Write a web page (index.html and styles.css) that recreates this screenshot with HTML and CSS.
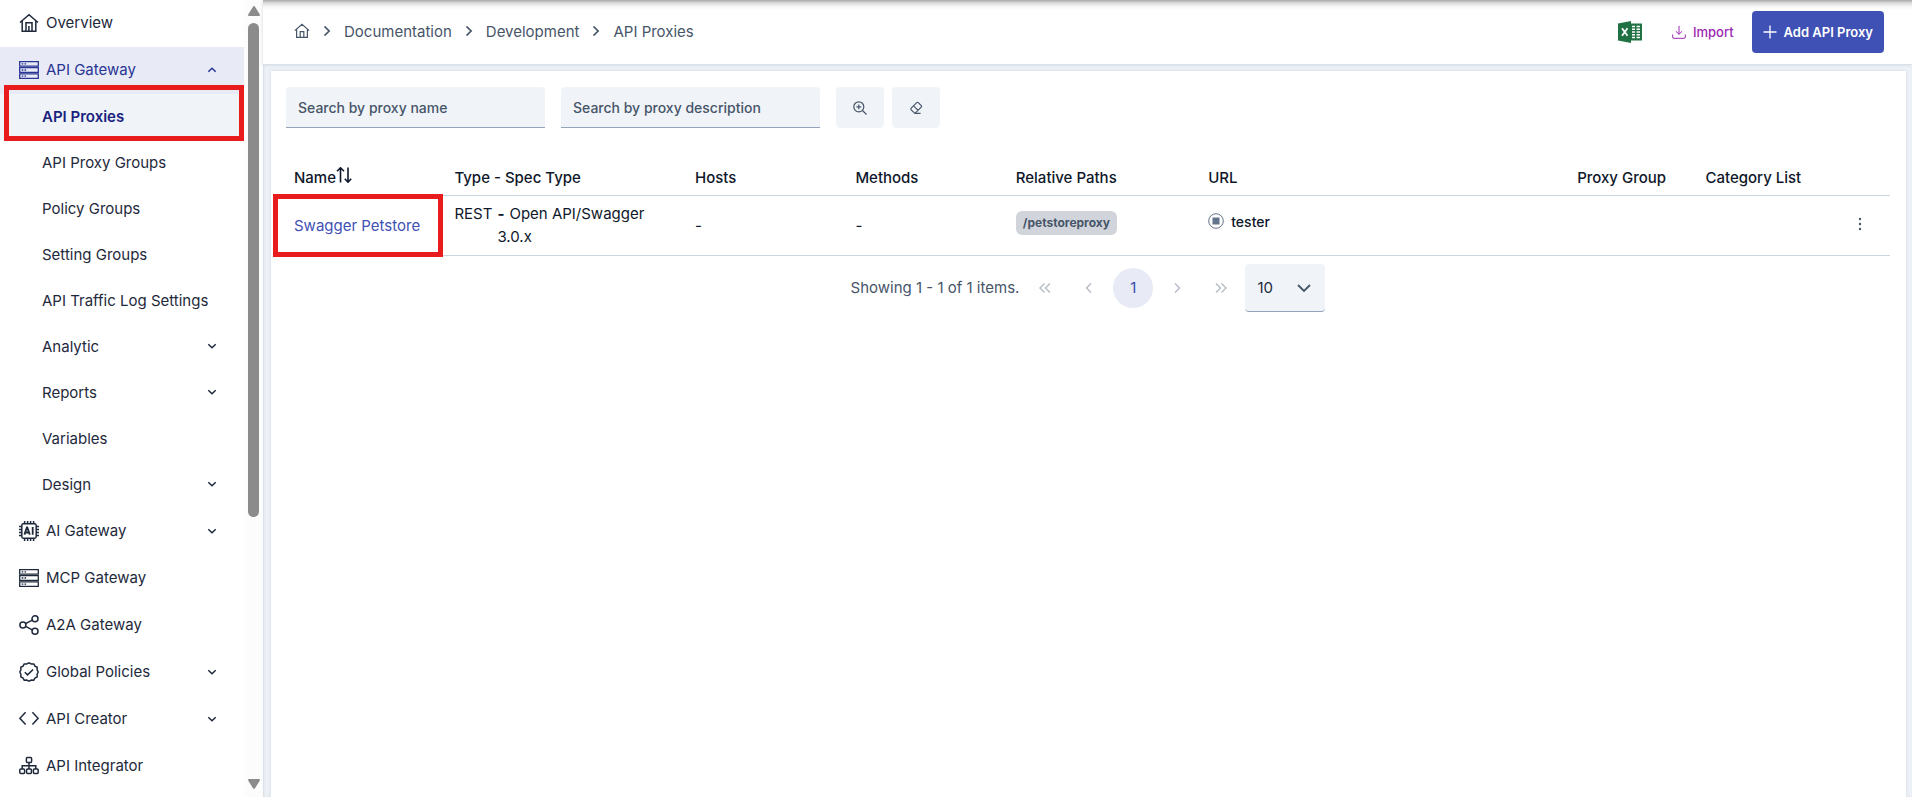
FILE: index.html
```
<!DOCTYPE html>
<html lang="en">
<head>
  <meta charset="UTF-8">
  <meta name="viewport" content="width=device-width, initial-scale=1.0"/>
  <title>API Proxies</title>
  <link rel="stylesheet" href="styles.css">
</head>
<body>
  <!-- shared icons -->
  <svg class="sprite" aria-hidden="true">
    <symbol id="home" viewBox="0 0 20 20"><path d="M1 9.5 10 1.8l9 7.7M3.2 8v10.2h13.6V8M7 18V9.7h6V18M9.9 18v-5"/></symbol>
    <symbol id="house" viewBox="0 0 16 16"><path d="M.8 7.6 8 1.2l7.2 6.4M2.6 6.4v8h10.8v-8M6.2 14.4V8.6h3.6v5.8"/></symbol>
    <symbol id="server" viewBox="0 0 20 20"><path d="M.7 1.6h18.6v4.6H.7zM.7 7.7h18.6v4.6H.7zM.7 13.8h18.6v4.6H.7zM2.7 3.9h1.6M5.5 3.9h1.6M2.7 10h1.6M5.5 10h1.6M2.7 16.1h1.6M5.5 16.1h1.6"/></symbol>
    <symbol id="down" viewBox="0 0 10 10"><path d="m1.3 3.2 3.7 3.6 3.7-3.6"/></symbol>
    <symbol id="up" viewBox="0 0 10 10"><path d="M1.3 6.8 5 3.2l3.7 3.6"/></symbol>
    <symbol id="right" viewBox="0 0 10 10"><path d="m2.5.5 4.600 4.500-4.600 4.500"/></symbol>
  </svg>

  <div class="app">
    <!-- Sidebar -->
    <aside class="sidebar">
      <nav class="menu">
        <a class="item" href="#"><svg class="icon"><use href="#home"/></svg>Overview</a>
        <button class="item open"><svg class="icon thin"><use href="#server"/></svg>API Gateway<svg class="chevron"><use href="#up"/></svg></button>
        <a class="item sub active" href="#">API Proxies</a>
        <a class="item sub" href="#">API Proxy Groups</a>
        <a class="item sub" href="#">Policy Groups</a>
        <a class="item sub" href="#">Setting Groups</a>
        <a class="item sub" href="#">API Traffic Log Settings</a>
        <button class="item sub">Analytic<svg class="chevron"><use href="#down"/></svg></button>
        <button class="item sub">Reports<svg class="chevron"><use href="#down"/></svg></button>
        <a class="item sub" href="#">Variables</a>
        <button class="item sub">Design<svg class="chevron"><use href="#down"/></svg></button>
        <button class="item">
          <svg class="icon" viewBox="0 0 20 20"><rect x="2.8" y="2.8" width="14.4" height="14.4" rx="1.6"/><path d="M5.6 0v2.8M8.6 0v2.8M11.6 0v2.8M14.6 0v2.8M5.6 17.2V20M8.6 17.2V20M11.6 17.2V20M14.6 17.2V20M0 5.6h2.8M0 8.6h2.8M0 11.6h2.8M0 14.6h2.8M17.2 5.6H20M17.2 8.6H20M17.2 11.6H20M17.2 14.6H20"/><path class="bold" d="m5.4 13.6 2.5-7.2h.4l2.5 7.2M6.2 11.5H10M13.7 6v7.8"/></svg>AI Gateway<svg class="chevron"><use href="#down"/></svg></button>
        <a class="item" href="#"><svg class="icon thin"><use href="#server"/></svg>MCP Gateway</a>
        <a class="item" href="#">
          <svg class="icon" viewBox="0 0 20 20"><circle cx="3.9" cy="10" r="3"/><circle cx="16" cy="3.8" r="3"/><circle cx="16" cy="16.2" r="3"/><path d="m6.6 8.6 6.7-3.5M6.6 11.4l6.7 3.5"/></svg>A2A Gateway</a>
        <button class="item">
          <svg class="icon" viewBox="0 0 20 20"><path d="M10 .9 12.3 2l2.5-.1 1.2 2.2 2.2 1.2-.1 2.5L19.2 10l-1.1 2.3.1 2.5-2.2 1.2-1.2 2.2-2.5-.1L10 19.1l-2.3-1-2.5.1L4 16l-2.2-1.2.1-2.5L.8 10l1.1-2.2-.1-2.5L4 4.1l1.2-2.2 2.5.1zM5.8 10.3l2.7 2.6 5.6-5.4"/></svg>Global Policies<svg class="chevron"><use href="#down"/></svg></button>
        <button class="item">
          <svg class="icon" viewBox="0 0 20 20"><path d="M6.6 3.2.9 9.3l5.7 6.1M13.4 3.2l5.7 6.1-5.7 6.1"/></svg>API Creator<svg class="chevron"><use href="#down"/></svg></button>
        <a class="item" href="#">
          <svg class="icon" viewBox="0 0 20 20"><rect x="7.4" y="1.6" width="5.2" height="5" rx="1"/><rect x=".8" y="13" width="4.8" height="4.6" rx="1"/><rect x="7.6" y="13" width="4.8" height="4.6" rx="1"/><rect x="14.4" y="13" width="4.8" height="4.6" rx="1"/><path d="M10 6.6V13M3.2 13V9.8h13.6V13"/></svg>API Integrator</a>
      </nav>
      <div class="scrollbar">
        <svg class="arrow" viewBox="0 0 12 10"><path d="M6 0q.6 0 1 .7l4.700 7.600Q12.400 10 11 10H1Q-.4 10 .3 8.300L5 .7Q5.400 0 6 0z"/></svg>
        <div class="track"><div class="thumb"></div></div>
        <svg class="arrow" viewBox="0 0 12 10"><path d="M6 10q.6 0 1-.7l4.700-7.600Q12.400 0 11 0H1Q-.4 0 .3 1.700L5 9.300q.4.700 1 .7z"/></svg>
      </div>
    </aside>

    <main class="main">
      <!-- Top bar -->
      <header class="topbar">
        <nav class="breadcrumb">
          <a href="#" aria-label="Home"><svg class="crumb-home"><use href="#house"/></svg></a>
          <svg class="sep"><use href="#right"/></svg>
          <a href="#">Documentation</a>
          <svg class="sep"><use href="#right"/></svg>
          <a href="#">Development</a>
          <svg class="sep"><use href="#right"/></svg>
          <a href="#">API Proxies</a>
        </nav>
        <div class="actions">
          <button class="excel" aria-label="Export to Excel">
            <svg viewBox="0 0 24 22"><path fill="#207245" d="M0 2.500 13 0v22L0 19.500z"/><path fill="#207245" d="M13 2.500h11v17H13z"/><path stroke="#fff" stroke-width="1.400" d="M14 5.500h3M18.500 5.500h3.500M14 8.300h3M18.500 8.300h3.500M14 11h3M18.500 11h3.500M14 13.700h3M18.500 13.700h3.500M14 16.500h3M18.500 16.500h3.500"/><path stroke="#fff" stroke-width="1.800" d="m4 7.300 5.500 7.400M9.500 7.300 4 14.700"/></svg>
          </button>
          <button class="import">
            <svg viewBox="0 0 14 14"><path d="M7 .8v8.400M3.800 6.200 7 9.300l3.200-3.100M.7 9.500v2.600q0 1.200 1.200 1.200h10.200q1.200 0 1.200-1.200V9.500"/></svg>Import</button>
          <button class="add">
            <svg viewBox="0 0 14 14"><path d="M7 .5v13M.5 7h13"/></svg>Add API Proxy</button>
        </div>
      </header>

      <section class="panel">
        <form class="filters">
          <input type="text" class="search" placeholder="Search by proxy name" aria-label="Search by proxy name"/>
          <input type="text" class="search" placeholder="Search by proxy description" aria-label="Search by proxy description"/>
          <div class="filter-buttons">
            <button type="button" aria-label="Search">
              <svg viewBox="0 0 14 14"><circle cx="5.800" cy="5.800" r="5"/><path d="m9.500 9.500 4 4M5.800 3.400v4.800M3.400 5.800h4.800"/></svg>
            </button>
            <button type="button" aria-label="Clear">
              <svg viewBox="0 0 14 14"><path d="M7.700 1.700q.8-.8 1.600 0l2.900 2.900q.8.800 0 1.600l-5.500 5.500q-.8.800-1.600 0L2.200 8.800q-.8-.8 0-1.600zM4.600 4.800l4.500 4.500M5.400 12.400h6.200"/></svg>
            </button>
          </div>
        </form>

        <table class="proxies">
          <colgroup>
            <col class="w10"><col class="w15"><col class="w10"><col class="w10"><col class="w12"><col class="w23"><col class="w8"><col class="w8"><col>
          </colgroup>
          <thead>
            <tr>
              <th>Name<svg class="sort" viewBox="0 0 16 16"><path d="M4.500 15.500V1M1 4.200 4.500.8 8 4.200M12 .5V15M8.800 11.800l3.200 3.400 3.200-3.400"/></svg></th>
              <th>Type - Spec Type</th>
              <th>Hosts</th>
              <th>Methods</th>
              <th>Relative Paths</th>
              <th>URL</th>
              <th>Proxy Group</th>
              <th>Category List</th>
              <th></th>
            </tr>
          </thead>
          <tbody>
            <tr>
              <td class="marked"><a href="#">Swagger Petstore</a></td>
              <td>
                <div class="spec"><span>REST</span><b>-</b><span>Open API/Swagger</span></div>
                <div class="version">3.0.x</div>
              </td>
              <td>-</td>
              <td>-</td>
              <td><div class="tag">/petstoreproxy</div></td>
              <td>
                <div class="env">
                  <svg viewBox="0 0 16 16"><circle cx="8" cy="8" r="7.300"/><rect x="5" y="5" width="6" height="6"/></svg>tester
                </div>
              </td>
              <td></td>
              <td></td>
              <td class="more">
                <button aria-label="More">
                  <svg viewBox="0 0 4 14"><circle cx="2" cy="2" r="1.200"/><circle cx="2" cy="7" r="1.200"/><circle cx="2" cy="12" r="1.200"/></svg>
                </button>
              </td>
            </tr>
          </tbody>
        </table>

        <!-- Pagination -->
        <div class="pager">
          <span class="showing">Showing 1 - 1 of 1 items.</span>
          <button class="page" disabled aria-label="First page"><svg viewBox="0 0 14 12"><path d="M6.500 1.500 2 6l4.500 4.500M12 1.500 7.500 6l4.500 4.500"/></svg></button>
          <button class="page" disabled aria-label="Previous page"><svg viewBox="0 0 14 12"><path d="M9 1.500 4.500 6 9 10.500"/></svg></button>
          <button class="page current">1</button>
          <button class="page" disabled aria-label="Next page"><svg viewBox="0 0 14 12"><path d="M5 1.500 9.500 6 5 10.500"/></svg></button>
          <button class="page" disabled aria-label="Last page"><svg viewBox="0 0 14 12"><path d="M2 1.500 6.500 6 2 10.500M7.500 1.500 12 6l-4.500 4.500"/></svg></button>
          <div class="rows">
            <select aria-label="Rows per page">
              <option>10</option>
            </select>
            <svg viewBox="0 0 14 8"><path d="m1 1 6 6 6-6"/></svg>
          </div>
        </div>
      </section>
    </main>
  </div>
</body>
</html>
```

FILE: styles.css
```
* {
  box-sizing: border-box;
}

body {
  margin: 0;
  font-family: Inter, "Liberation Sans", sans-serif;
  font-size: 15px;
  color: #0f172a;
  background-color: #edf1f7;
}

button,
input,
select {
  font-family: inherit;
  border: none;
  background: none;
  padding: 0;
  margin: 0;
}

button {
  cursor: pointer;
}

a {
  color: inherit;
  text-decoration: none;
}

svg {
  fill: none;
  stroke: currentColor;
  flex-shrink: 0;
}

.sprite {
  display: none;
}

.app {
  display: flex;
  height: 100vh;
}

/* Sidebar */
.sidebar {
  display: flex;
  width: 263px;
  flex-shrink: 0;
  overflow: hidden;
  background-color: #fff;
}

.menu {
  flex: 1;
}

.item {
  display: flex;
  align-items: center;
  gap: 7px;
  width: 100%;
  height: 47px;
  padding: 0 27px 2px 19px;
  font-size: 15px;
  color: #1e293b;
  text-align: left;
  white-space: nowrap;
}

.item.sub {
  height: 46px;
  padding-left: 42px;
}

.item.open {
  background-color: #e8eaf6;
  color: #283593;
}

.item.active {
  position: relative;
  background-color: #f0f4f9;
  color: #1a237e;
  font-weight: 600;
}

.item.active::after {
  content: "";
  position: absolute;
  inset: -9px 0 -1px 4px;
  border: 5px solid #e81c1c;
}

.icon {
  width: 20px;
  height: 20px;
  stroke-width: 1.5;
}

.icon.thin {
  stroke-width: 1.3;
}

.icon .bold {
  stroke-width: 1.8;
}

.chevron {
  width: 10px;
  height: 10px;
  margin-left: auto;
  stroke-width: 1.5;
}

.scrollbar {
  display: flex;
  flex-direction: column;
  align-items: center;
  gap: 7px;
  width: 19px;
  padding: 6px 0 8px;
  background-color: #fcfcfc;
}

.arrow {
  width: 12px;
  height: 10px;
  fill: #8b8b8b;
  stroke: none;
}

.track {
  flex: 1;
  width: 11px;
}

.thumb {
  height: 66%;
  border-radius: 6px;
  background-color: #8b8b8b;
}

/* Top bar */
.main {
  display: flex;
  flex-direction: column;
  flex: 1;
  min-width: 0;
  box-shadow: inset 1px 0 2px #d5dbe3;
}

.topbar {
  display: flex;
  justify-content: space-between;
  align-items: center;
  height: 64px;
  padding: 0 28px 0 31px;
  background: linear-gradient(#a6a6a6, #dcdcdc 3px, #f8f8f8 7px, #fff 10px);
  box-shadow: 0 1px 3px #cfd6df;
}

.breadcrumb {
  display: flex;
  align-items: center;
  padding-bottom: 2px;
  color: #475569;
}

.crumb-home {
  display: block;
  width: 16px;
  height: 16px;
  stroke-width: 1.2;
}

.sep {
  width: 10px;
  height: 10px;
  margin: 0 12px;
  stroke-width: 1.7;
}

.actions {
  display: flex;
  align-items: center;
}

.excel svg {
  display: block;
  width: 24px;
  height: 22px;
  stroke: none;
}

.import,
.add {
  display: flex;
  align-items: center;
  gap: 7px;
  height: 42px;
  font-size: 13px;
  font-weight: 500;
}

.import {
  padding: 0 18px 0 30px;
  color: #9c27b0;
}

.import svg,
.add svg {
  width: 14px;
  height: 14px;
}

.add {
  padding: 0 11px;
  border-radius: 4px;
  background-color: #3f51b5;
  color: #fff;
  font-weight: 600;
}

.add svg {
  stroke-width: 1.3;
}

/* Content */
.panel {
  flex: 1;
  margin: 7px 6px 0 8px;
  padding: 16px 16px 0 15px;
  background-color: #fff;
  box-shadow: 0 0 3px #cfd6df;
}

.filters {
  display: flex;
  gap: 16px;
  height: 41px;
}

.search {
  width: 259px;
  padding: 0 12px;
  border-bottom: 1px solid #94a3b8;
  border-radius: 4px 4px 0 0;
  background-color: #f0f4f9;
  font-size: 14px;
  font-weight: 500;
}

.search::placeholder {
  color: #475569;
  opacity: 1;
}

.filter-buttons {
  display: flex;
  gap: 8px;
}

.filter-buttons button {
  display: flex;
  align-items: center;
  justify-content: center;
  width: 48px;
  border-radius: 4px;
  background-color: #f0f4f9;
  color: #475569;
}

.filter-buttons svg {
  width: 14px;
  height: 14px;
  stroke-width: 1.2;
}

.proxies {
  width: 100%;
  margin-top: 27px;
  border-collapse: collapse;
  table-layout: fixed;
}

.w8 { width: 8%; }
.w10 { width: 10%; }
.w12 { width: 12%; }
.w15 { width: 15%; }
.w23 { width: 23%; }

.proxies th {
  height: 40px;
  padding: 6px 8px 0;
  border-bottom: 1px solid #cbd5e1;
  font-size: 15px;
  font-weight: 500;
  line-height: 24px;
  text-align: left;
  white-space: nowrap;
}

.sort {
  width: 16px;
  height: 16px;
  stroke-width: 1.6;
  vertical-align: 0;
}

.proxies td {
  height: 60px;
  padding: 0 8px;
  border-bottom: 1px solid #cbd5e1;
  font-size: 15px;
  line-height: 23px;
}

.marked {
  position: relative;
  color: #3f51b5;
  white-space: nowrap;
}

.marked::after {
  content: "";
  position: absolute;
  inset: -2px 3px -2px -13px;
  border: 5px solid #e81c1c;
  pointer-events: none;
}

.spec {
  display: flex;
  gap: 5px;
}

.version {
  padding-left: 43px;
}

.tag {
  width: fit-content;
  margin-bottom: 4px;
  padding: 0 7px;
  border-radius: 6px;
  background-color: #d1d5db;
  color: #475569;
  font-size: 12px;
  font-weight: 700;
  line-height: 24px;
}

.env {
  display: flex;
  align-items: center;
  gap: 7px;
  padding-bottom: 8px;
  font-size: 14px;
  font-weight: 500;
}

.env svg {
  width: 16px;
  height: 16px;
  color: #64748b;
}

.env rect {
  fill: currentColor;
}

.proxies .more {
  padding-right: 28px;
  text-align: right;
}

.more svg {
  display: block;
  width: 4px;
  height: 14px;
  fill: #475569;
  stroke: none;
}

/* Pagination */
.pager {
  display: flex;
  align-items: center;
  justify-content: center;
  gap: 4px;
  padding-top: 8px;
  color: #475569;
}

.showing {
  margin-right: 2px;
}

.page {
  display: flex;
  align-items: center;
  justify-content: center;
  width: 40px;
  height: 40px;
  border-radius: 50%;
  color: #475569;
}

.page svg {
  width: 14px;
  height: 12px;
  stroke-width: 1.4;
}

.page:disabled {
  color: #b4bac5;
}

.page.current {
  background-color: #e8eaf6;
  color: #3949ab;
  font-size: 15px;
}

.rows {
  position: relative;
}

.rows select {
  appearance: none;
  width: 80px;
  height: 48px;
  padding: 0 12px;
  border-bottom: 1px solid #94a3b8;
  border-radius: 4px;
  background-color: #f0f4f9;
  color: #1e293b;
  font-size: 15px;
}

.rows svg {
  position: absolute;
  top: 20px;
  right: 14px;
  width: 14px;
  height: 8px;
  stroke-width: 1.8;
  pointer-events: none;
}
```
